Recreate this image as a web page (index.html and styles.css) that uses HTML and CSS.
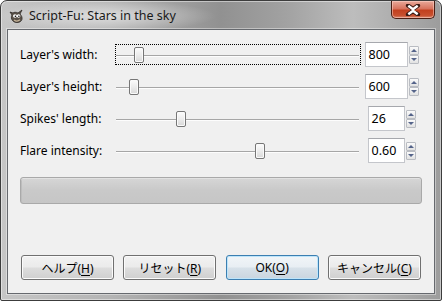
FILE: index.html
```html
<!DOCTYPE html>
<html lang="ja">
<head>
  <meta charset="UTF-8">
  <title>Script-Fu: Stars in the sky</title>
  <link rel="stylesheet" href="styles.css">
</head>
<body>
  <div class="window">

    <!-- title bar -->
    <div class="titlebar">
      <svg class="app-icon" width="16" height="16" viewBox="0 0 16 16">
        <path d="M2 4 L4 7 C3 9 3 11 5 13 C7 15 11 15 13 13 C15 11 14 8 12 6 L14 2 L10 5 C8 4 6 4 5 5 Z" fill="#5a5148" stroke="#2e2a26" stroke-width="0.8"/>
        <ellipse cx="7" cy="8" rx="2" ry="1.8" fill="#fff"/>
        <ellipse cx="10.6" cy="8" rx="1.8" ry="1.7" fill="#fff"/>
        <circle cx="7.4" cy="8.2" r="0.8" fill="#000"/>
        <circle cx="10.9" cy="8.2" r="0.8" fill="#000"/>
        <path d="M6 12 C8 13.5 10 13.5 12 11.8" stroke="#c9b79b" stroke-width="1.2" fill="none"/>
      </svg>
      <span class="title">Script-Fu: Stars in the sky</span>
      <div class="close">
        <svg width="16" height="12" viewBox="0 0 16 12">
          <path d="M3 1.5 L8 5 L13 1.5 M3 10.5 L8 7 L13 10.5" stroke="#3a1a14" stroke-width="4.2" fill="none" stroke-linecap="round"/>
          <path d="M3.3 1.8 L8 5.2 L12.7 1.8 M3.3 10.2 L8 6.8 L12.7 10.2" stroke="#fff" stroke-width="2.4" fill="none"/>
        </svg>
      </div>
    </div>

    <!-- client area -->
    <div class="client">
      <div class="params">
        <div class="label">Layer's width:</div>
        <div class="slider focused"><div class="track"></div><div class="thumb" style="left: 19px"></div></div>
        <div class="spin wide"><div class="entry">800</div><div class="arrows"><span class="up"></span><span class="down"></span></div></div>

        <div class="label">Layer's height:</div>
        <div class="slider"><div class="track"></div><div class="thumb" style="left: 14px"></div></div>
        <div class="spin wide"><div class="entry">600</div><div class="arrows"><span class="up"></span><span class="down"></span></div></div>

        <div class="label">Spikes' length:</div>
        <div class="slider"><div class="track"></div><div class="thumb" style="left: 61px"></div></div>
        <div class="spin"><div class="entry">26</div><div class="arrows"><span class="up"></span><span class="down"></span></div></div>

        <div class="label">Flare intensity:</div>
        <div class="slider"><div class="track"></div><div class="thumb" style="left: 140px"></div></div>
        <div class="spin"><div class="entry">0.60</div><div class="arrows"><span class="up"></span><span class="down"></span></div></div>
      </div>

      <div class="progress"></div>

      <div class="buttons">
        <button>ヘルプ(<u>H</u>)</button>
        <button>リセット(<u>R</u>)</button>
        <button class="default">OK(<u>O</u>)</button>
        <button>キャンセル(<u>C</u>)</button>
      </div>
    </div>
  </div>
</body>
</html>
```

FILE: styles.css
```css
body {
  margin: 0;
  font-family: "Noto Sans", "Noto Sans CJK JP", sans-serif;
  font-size: 12px;
  color: #000;
  background: #fff;
}

.window {
  width: 442px;
  height: 301px;
  box-sizing: border-box;
  border: 1px solid #3c3c3c;
  border-radius: 7px 7px 2px 2px;
  padding: 0 6px 6px 6px;
  display: flex;
  flex-direction: column;
  background:
    radial-gradient(ellipse 110px 16px at 105px 15px, rgba(255, 255, 255, 0.55), rgba(255, 255, 255, 0) 100%),
    linear-gradient(to right, #c6c6c6 0%, #b4b4b4 25%, #919191 50%, #a2a2a2 65%, #bdbdbd 80%, #aaaaaa 92%, #9c9c9c 100%);
  box-shadow: inset 0 0 0 1px rgba(255, 255, 255, 0.45);
}

/* title bar */
.titlebar {
  height: 28px;
  display: flex;
  align-items: center;
  padding-left: 1px;
}

.app-icon {
  margin-top: 1px;
}

.title {
  margin-left: 5px;
  font-size: 12.5px;
  color: #1a1a1a;
  margin-top: 1px;
}

.close {
  margin-left: auto;
  align-self: flex-start;
  width: 44px;
  height: 18px;
  box-sizing: border-box;
  border: 1px solid #4a1e14;
  border-top: none;
  border-radius: 0 0 5px 5px;
  background: linear-gradient(#e9a99a 0%, #d7735e 45%, #c2401f 55%, #c8502f 85%, #d98a72 100%);
  box-shadow: inset 0 0 0 1px rgba(255, 220, 210, 0.5);
  display: flex;
  align-items: center;
  justify-content: center;
}

/* client area */
.client {
  flex: 1;
  border: 1px solid #66696e;
  background: #f0f0f0;
  padding: 12px 12px 13px 12px;
  display: flex;
  flex-direction: column;
  box-shadow: 0 0 0 1px rgba(255, 255, 255, 0.4);
}

.params {
  display: grid;
  grid-template-columns: 95px 1fr 61px;
  grid-auto-rows: 25px;
  row-gap: 7px;
  align-items: center;
}

.label {
  white-space: nowrap;
}

.slider {
  position: relative;
  height: 21px;
  box-sizing: border-box;
  border: 1px dotted transparent;
  margin-top: -1px;
}

.slider.focused {
  border-color: #000;
}

.track {
  position: absolute;
  left: 0;
  right: 1px;
  top: 10px;
  border-top: 1px solid #a6a6a6;
  border-bottom: 1px solid #fdfdfd;
}

.thumb {
  position: absolute;
  top: 2px;
  width: 10px;
  height: 16px;
  box-sizing: border-box;
  border: 1px solid #767676;
  border-radius: 2px;
  background: linear-gradient(#fcfcfc 0%, #ececec 50%, #d8d8d8 100%);
  box-shadow: inset 0 0 0 1px #fafafa;
  margin-left: -1px;
}

.spin {
  justify-self: center;
  display: flex;
  align-items: center;
  gap: 1px;
  height: 25px;
}

.entry {
  width: 37px;
  height: 25px;
  box-sizing: border-box;
  border: 1px solid #c4c6cb;
  border-top-color: #a6a8ad;
  background: #fff;
  padding-left: 3px;
  line-height: 23px;
  font-size: 12.5px;
}

.spin.wide .entry {
  width: 43px;
}

.arrows {
  display: flex;
  flex-direction: column;
  width: 10px;
}

.arrows span {
  height: 9px;
  box-sizing: border-box;
  border: 1px solid #b9bcc2;
  border-radius: 1px;
  background: linear-gradient(#fbfbfb, #e1e1e1);
  display: flex;
  align-items: center;
  justify-content: center;
}

.arrows span::after {
  content: "";
  border-left: 3px solid transparent;
  border-right: 3px solid transparent;
}

.arrows .up::after {
  border-bottom: 3px solid #55648a;
}

.arrows .down::after {
  border-top: 3px solid #55648a;
}

/* progress bar */
.progress {
  margin-top: 14px;
  height: 27px;
  box-sizing: border-box;
  border: 1px solid #a9a9a9;
  border-radius: 3px;
  background: linear-gradient(#d6d6d6, #c9c9c9 50%, #c6c6c6);
  box-shadow: inset 0 1px 0 #e2e2e2, inset 1px 0 0 #bdbdbd;
}

/* dialog buttons */
.buttons {
  margin-top: auto;
  display: flex;
  justify-content: space-between;
  padding: 0 1px;
}

button {
  width: 93px;
  height: 25px;
  box-sizing: border-box;
  border: 1px solid #707070;
  border-radius: 3px;
  background: linear-gradient(#f2f2f2 0%, #ebebeb 48%, #dddddd 52%, #cfcfcf 100%);
  box-shadow: inset 0 0 0 1px #fbfbfb;
  font-family: "Noto Sans", "Noto Sans CJK JP", sans-serif;
  font-size: 12px;
  color: #000;
  padding: 0;
}

button.default {
  border-color: #3c7fb1;
  box-shadow: inset 0 0 0 1px #bde5fb;
  background: linear-gradient(#f1f5f8 0%, #e8eef3 48%, #d7e1e9 52%, #c9d5df 100%);
}

button u {
  text-underline-offset: 2px;
}
```
